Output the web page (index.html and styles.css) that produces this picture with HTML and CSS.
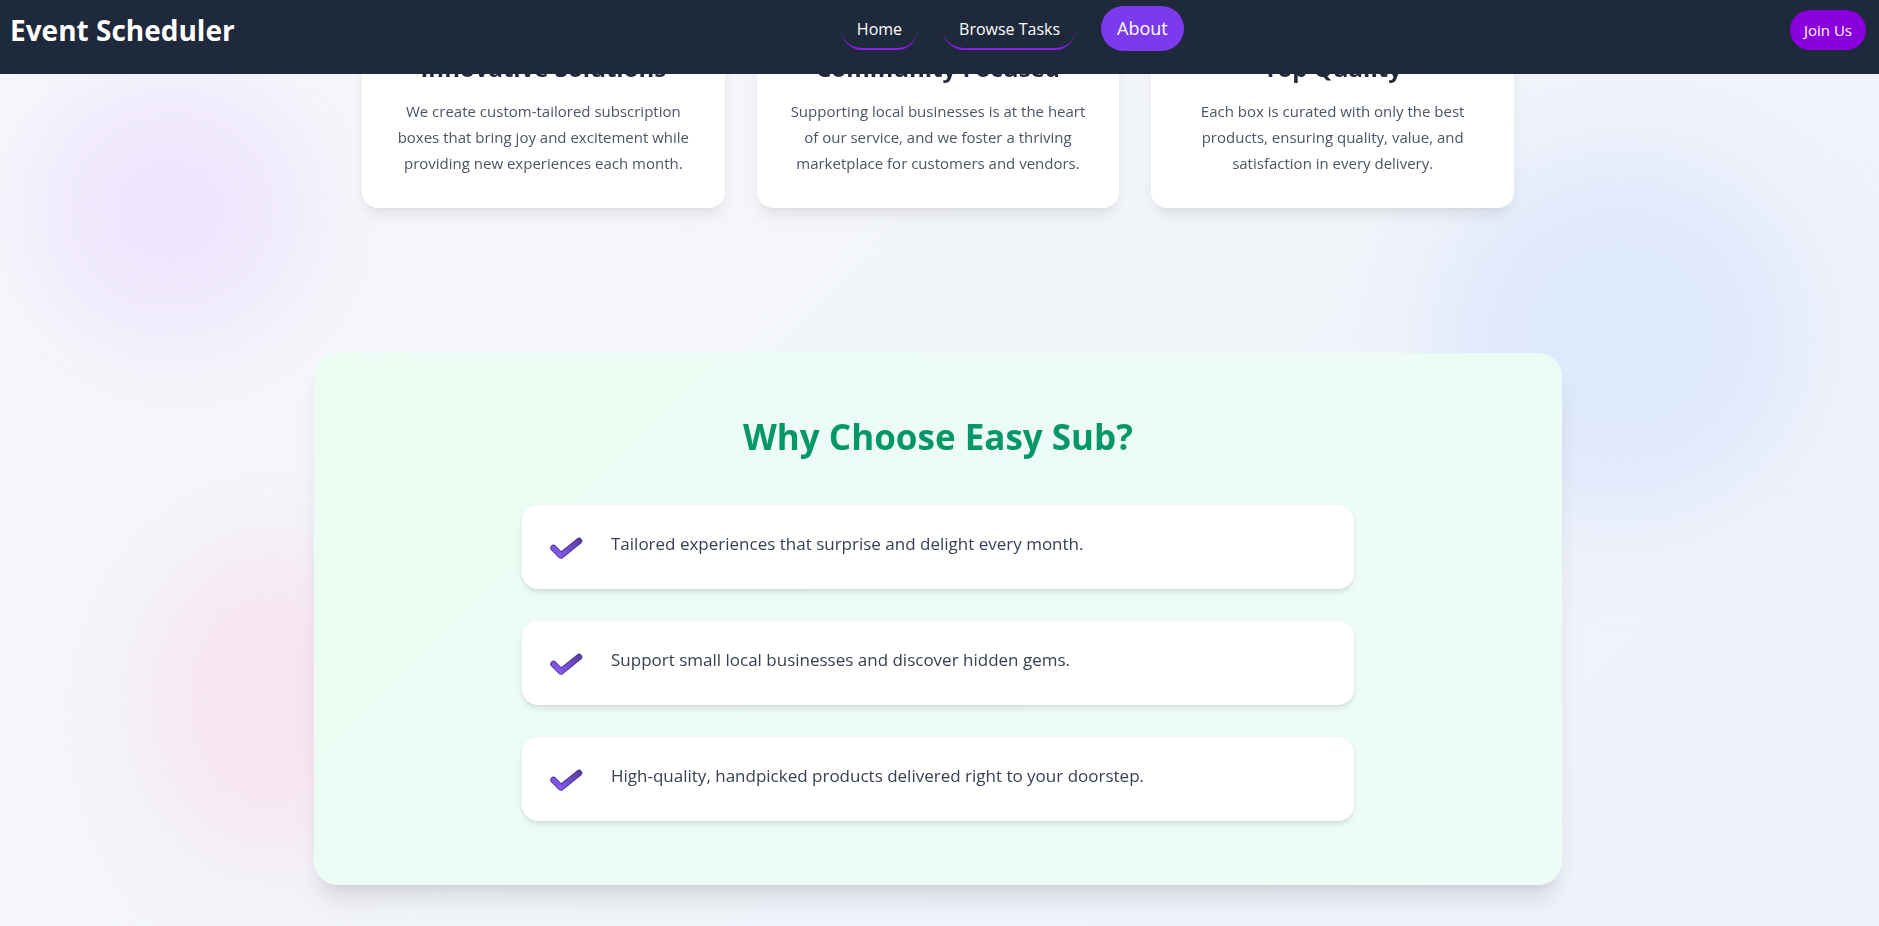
FILE: index.html
```html
<!DOCTYPE html>
<html lang="en">
<head>
<meta charset="utf-8">
<title>Event Scheduler</title>
<link rel="stylesheet" href="styles.css">
</head>
<body>
<div class="blob blob-purple"></div>
<div class="blob blob-blue"></div>
<div class="blob blob-pink"></div>

<header class="navbar">
  <div class="nav-row">
    <a class="brand" href="#">Event Scheduler</a>
    <nav class="nav-links">
      <a class="nav-link" href="#">Home</a>
      <a class="nav-link" href="#">Browse Tasks</a>
      <a class="nav-link active" href="#">About</a>
    </nav>
    <a class="join-btn" href="#">Join Us</a>
  </div>
</header>

<main class="content">
  <section class="values">
    <div class="value-card">
      <h3 class="value-title">Innovative Solutions</h3>
      <p class="value-text">We create custom-tailored subscription boxes that bring joy and excitement while providing new experiences each month.</p>
    </div>
    <div class="value-card">
      <h3 class="value-title">Community Focused</h3>
      <p class="value-text">Supporting local businesses is at the heart of our service, and we foster a thriving marketplace for customers and vendors.</p>
    </div>
    <div class="value-card">
      <h3 class="value-title">Top Quality</h3>
      <p class="value-text">Each box is curated with only the best products, ensuring quality, value, and satisfaction in every delivery.</p>
    </div>
  </section>

  <section class="why">
    <h2 class="why-title">Why Choose Easy Sub?</h2>
    <ul class="why-list">
      <li class="why-item">
        <svg class="check" width="40" height="36" viewBox="0 0 40 36"><defs><linearGradient id="cg1" x1="0" y1="1" x2="1" y2="0"><stop offset="0" stop-color="#8b5cf6"/><stop offset="1" stop-color="#5b3ea6"/></linearGradient></defs><polyline points="7.5,19 15,26.5 33,12" fill="none" stroke="#4c2f96" stroke-width="6.4" stroke-linecap="round" stroke-linejoin="round"/><polyline points="7.5,19 15,26.5 33,12" fill="none" stroke="url(#cg1)" stroke-width="4.6" stroke-linecap="round" stroke-linejoin="round"/></svg>
        <span class="why-text">Tailored experiences that surprise and delight every month.</span>
      </li>
      <li class="why-item">
        <svg class="check" width="40" height="36" viewBox="0 0 40 36"><polyline points="7.5,19 15,26.5 33,12" fill="none" stroke="#4c2f96" stroke-width="6.4" stroke-linecap="round" stroke-linejoin="round"/><polyline points="7.5,19 15,26.5 33,12" fill="none" stroke="url(#cg1)" stroke-width="4.6" stroke-linecap="round" stroke-linejoin="round"/></svg>
        <span class="why-text">Support small local businesses and discover hidden gems.</span>
      </li>
      <li class="why-item">
        <svg class="check" width="40" height="36" viewBox="0 0 40 36"><polyline points="7.5,19 15,26.5 33,12" fill="none" stroke="#4c2f96" stroke-width="6.4" stroke-linecap="round" stroke-linejoin="round"/><polyline points="7.5,19 15,26.5 33,12" fill="none" stroke="url(#cg1)" stroke-width="4.6" stroke-linecap="round" stroke-linejoin="round"/></svg>
        <span class="why-text">High-quality, handpicked products delivered right to your doorstep.</span>
      </li>
    </ul>
  </section>
</main>
</body>
</html>
```

FILE: styles.css
```css
* { box-sizing: border-box; }

html, body {
  margin: 0;
  padding: 0;
}

body {
  font-family: "Open Sans", "Noto Sans", sans-serif;
  background: linear-gradient(135deg, #f7f8fc 0%, #f1f4fa 60%, #eef2fa 100%);
  min-height: 926px;
  overflow: hidden;
  color: #1f2937;
}

.blob {
  position: fixed;
  border-radius: 50%;
  filter: blur(45px);
  z-index: 0;
}
.blob-purple {
  left: 30px; top: 75px;
  width: 280px; height: 270px;
  background: #eee6fd;
}
.blob-blue {
  left: 1430px; top: 150px;
  width: 380px; height: 370px;
  background: #dfe9fc;
}
.blob-pink {
  left: 140px; top: 540px;
  width: 260px; height: 320px;
  background: #f7e6f2;
}

.navbar {
  position: fixed;
  top: 0; left: 0; right: 0;
  height: 74px;
  background: #1e293b;
  z-index: 10;
}
.nav-row {
  height: 60px;
  display: flex;
  align-items: flex-start;
  padding: 0 13px 0 10px;
}
.brand {
  color: #ffffff;
  text-decoration: none;
  font-weight: 700;
  font-size: 28px;
  line-height: 38px;
  margin-top: 11px;
}
.nav-links {
  flex: 1;
  display: flex;
  justify-content: center;
  align-items: flex-start;
  gap: 25px;
}
.nav-link {
  color: #ffffff;
  text-decoration: none;
  font-size: 16px;
  padding: 0 16px;
  height: 42px;
  line-height: 42px;
  border-radius: 21px;
  border-bottom: 2px solid #8b1ee6;
  margin-top: 8px;
}
.nav-link.active {
  background: #7c3aed;
  border-bottom: none;
  font-size: 18px;
  height: 45px;
  line-height: 45px;
  border-radius: 23px;
  margin-top: 6px;
}
.join-btn {
  color: #ffffff;
  background: #8a00dc;
  text-decoration: none;
  font-size: 15px;
  height: 40px;
  line-height: 40px;
  padding: 0 14px;
  border-radius: 20px;
  margin-top: 10px;
}

.content {
  position: relative;
  z-index: 1;
  padding-right: 3px;
}

.values {
  max-width: 1152px;
  margin: 0 auto;
  padding-top: 20px;
  display: grid;
  grid-template-columns: repeat(3, 1fr);
  gap: 32px;
}
.value-card {
  background: #ffffff;
  border-radius: 16px;
  padding: 32px;
  text-align: center;
  box-shadow: 0 10px 15px -3px rgba(0,0,0,0.08), 0 4px 6px -4px rgba(0,0,0,0.08);
}
.value-title {
  margin: 0 0 14px;
  font-size: 24px;
  line-height: 32px;
  font-weight: 700;
  color: #1f2937;
}
.value-text {
  margin: 0;
  font-size: 15px;
  line-height: 26px;
  color: #4b5563;
}

.why {
  max-width: 1248px;
  margin: 145px auto 0;
  background: linear-gradient(135deg, #ebfcf3 0%, #edfcf6 100%);
  border-radius: 24px;
  padding: 64px;
  box-shadow: 0 20px 25px -5px rgba(0,0,0,0.1), 0 8px 10px -6px rgba(0,0,0,0.08);
}
.why-title {
  margin: 0 0 48px;
  text-align: center;
  font-size: 35px;
  line-height: 40px;
  font-weight: 700;
  color: #059669;
}
.why-list {
  list-style: none;
  margin: 0 auto;
  padding: 0;
  width: 832px;
  display: flex;
  flex-direction: column;
  gap: 32px;
}
.why-item {
  background: #ffffff;
  border-radius: 16px;
  padding: 24px;
  display: flex;
  align-items: flex-start;
  box-shadow: 0 4px 6px -1px rgba(0,0,0,0.1), 0 2px 4px -2px rgba(0,0,0,0.08);
}
.check {
  flex: none;
  margin-right: 25px;
}
.why-text {
  font-size: 17px;
  line-height: 30px;
  color: #374151;
}
```
